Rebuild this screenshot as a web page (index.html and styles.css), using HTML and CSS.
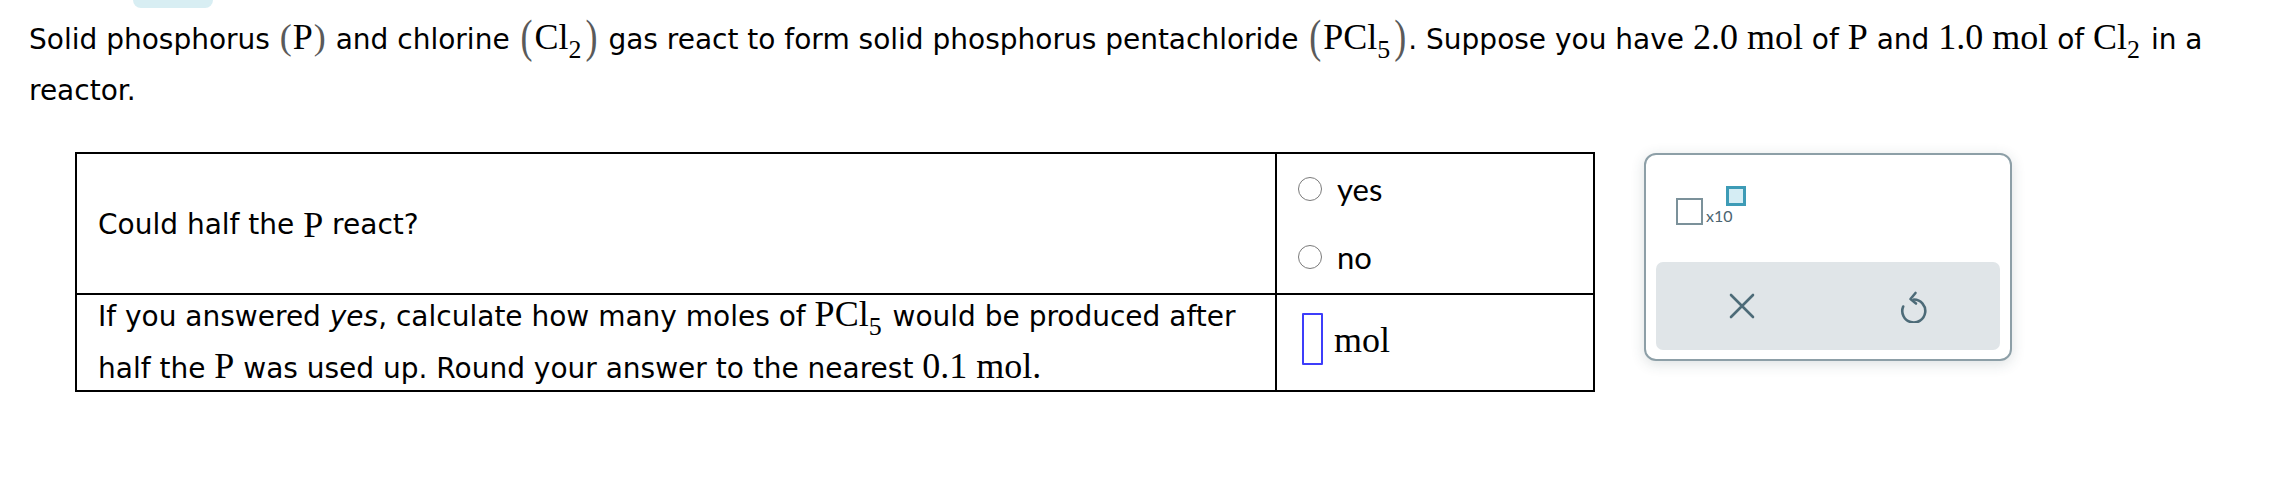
FILE: index.html
```html
<!DOCTYPE html>
<html lang="en">
<head>
<meta charset="utf-8">
<title>Phosphorus pentachloride</title>
<link rel="stylesheet" href="styles.css">
</head>
<body>
<div class="tab"></div>
<p class="intro">Solid phosphorus <span class="m"><span class="paren">(</span>P<span class="paren">)</span></span> and chlorine <span class="m"><span class="paren big">(</span>Cl<sub>2</sub><span class="paren big">)</span></span> gas react to form solid phosphorus pentachloride <span class="m"><span class="paren big">(</span>PCl<sub>5</sub><span class="paren big">)</span></span>. Suppose you have <span class="m">2.0 mol</span> of <span class="m">P</span> and <span class="m">1.0 mol</span> of <span class="m">Cl<sub>2</sub></span> in a<br>reactor.</p>

<div class="main">
  <div class="qtable">
    <div class="cell q r1">Could half the&nbsp;<span class="m">P</span>&nbsp;react?</div>
    <div class="cell a r1">
      <label class="opt"><input type="radio" name="half" class="radio"><span>yes</span></label>
      <label class="opt"><input type="radio" name="half" class="radio"><span>no</span></label>
    </div>
    <div class="cell q r2"><div class="q2">If you answered <i>yes</i>, calculate how many moles of <span class="m">PCl<sub>5</sub></span> would be produced after<br>half the <span class="m">P</span> was used up. Round your answer to the nearest <span class="m">0.1 mol.</span></div></div>
    <div class="cell a r2">
      <div class="answer"><input type="text" class="ans-box" aria-label="answer"><span class="unit">mol</span></div>
    </div>
  </div>

  <div class="panel">
    <div class="panel-top">
      <div class="sci"><span class="sq"></span><span class="x10">x10</span><span class="sq-sup"></span></div>
    </div>
    <div class="actions">
      <button class="act" aria-label="clear">
        <svg width="26" height="26" viewBox="0 0 26 26"><path d="M2 2 L24 24 M24 2 L2 24" stroke="#4d6b78" stroke-width="2.6" fill="none" stroke-linecap="round"/></svg>
      </button>
      <button class="act" aria-label="undo">
        <svg width="28" height="34" viewBox="0 0 28 34"><path d="M14 10.5 A11.5 11.5 0 1 1 3.2 17.5" stroke="#4d6b78" stroke-width="2.6" fill="none" stroke-linecap="round"/><path d="M15.5 4 L10.5 10 L16 14.5" stroke="#4d6b78" stroke-width="2.6" fill="none" stroke-linecap="round" stroke-linejoin="round"/></svg>
      </button>
    </div>
  </div>
</div>
</body>
</html>
```

FILE: styles.css
```css
* { box-sizing: border-box; }

body {
  margin: 0;
  background: #fff;
  font-family: "DejaVu Sans", Verdana, sans-serif;
  font-size: 28px;
  color: #000;
}

.tab {
  margin-left: 133px;
  width: 80px;
  height: 8px;
  background: #d8eef3;
  border-radius: 0 0 12px 12px;
}

.intro {
  margin: 6px 0 0;
  padding-left: 29px;
  line-height: 51px;
  white-space: nowrap;
}

.m {
  font-family: "Liberation Serif", "Times New Roman", serif;
  font-size: 36px;
  line-height: 1;
}

.m sub {
  font-size: 0.72em;
  vertical-align: -0.36em;
  line-height: 0;
  padding-right: 2px;
}

.paren {
  display: inline-block;
  color: #5a5a5a;
  font-weight: 300;
  margin: 0 1px;
}

.paren.big {
  transform: scaleY(1.28);
  margin: 0 2px;
}

.main {
  display: flex;
  align-items: flex-start;
  gap: 49px;
  padding-left: 75px;
  margin-top: 36px;
}

.qtable {
  display: grid;
  grid-template-columns: 1200px 316px;
  border: 2px solid #000;
}

.cell {
  padding: 0;
}

.cell.q {
  border-right: 2px solid #000;
  padding-left: 21px;
}

.cell.r1 {
  height: 141px;
  border-bottom: 2px solid #000;
}

.cell.q.r1 {
  display: flex;
  align-items: center;
  padding-top: 2px;
}

.cell.r2 {
  height: 95px;
}

.q2 {
  line-height: 52px;
  margin-top: -4px;
  white-space: nowrap;
}

.cell.a.r1 {
  padding: 1px 0 0 21px;
}

.opt {
  display: flex;
  align-items: center;
  height: 68px;
  font-family: Lato, "Open Sans", sans-serif;
  font-size: 31px;
}

.radio {
  appearance: none;
  -webkit-appearance: none;
  margin: 0 15px 0 0;
  width: 24px;
  height: 24px;
  border: 1.6px solid #7a7a7a;
  border-radius: 50%;
  background: #fff;
}

.cell.a.r2 {
  padding: 18px 0 0 25px;
}

.answer {
  display: flex;
  align-items: center;
}

.ans-box {
  appearance: none;
  -webkit-appearance: none;
  width: 21px;
  height: 52px;
  margin: 0;
  padding: 0;
  border: 2px solid #3d3dfa;
  border-radius: 1px;
  background: #fff;
}

.unit {
  font-family: "Liberation Serif", "Times New Roman", serif;
  font-size: 36px;
  margin-left: 11px;
  margin-top: 2px;
}

.panel {
  width: 368px;
  height: 208px;
  margin-top: 1px;
  border: 2px solid #8d9fa7;
  border-radius: 12px;
  background: #fff;
  box-shadow: 0 3px 14px rgba(40, 60, 70, 0.16);
  padding: 0 10px 9px 10px;
  display: flex;
  flex-direction: column;
}

.panel-top {
  flex: 0 0 107px;
  padding: 31px 0 0 20px;
}

.sci {
  display: flex;
  align-items: flex-start;
}

.sq {
  width: 27px;
  height: 27px;
  margin-top: 12px;
  border: 2.5px solid #7b919a;
}

.x10 {
  font-family: Lato, "Open Sans", sans-serif;
  font-size: 16px;
  line-height: 16px;
  color: #4b6470;
  margin: 22px 0 0 3px;
}

.sq-sup {
  width: 20px;
  height: 20px;
  margin-left: -7px;
  border: 3px solid #3d9bb6;
  background: #d5edf4;
}

.actions {
  flex: 1;
  display: flex;
  background: #e0e5e8;
  border-radius: 7px;
}

.act {
  flex: 1;
  display: flex;
  align-items: center;
  justify-content: center;
  border: 0;
  background: transparent;
  padding: 0;
}
```
